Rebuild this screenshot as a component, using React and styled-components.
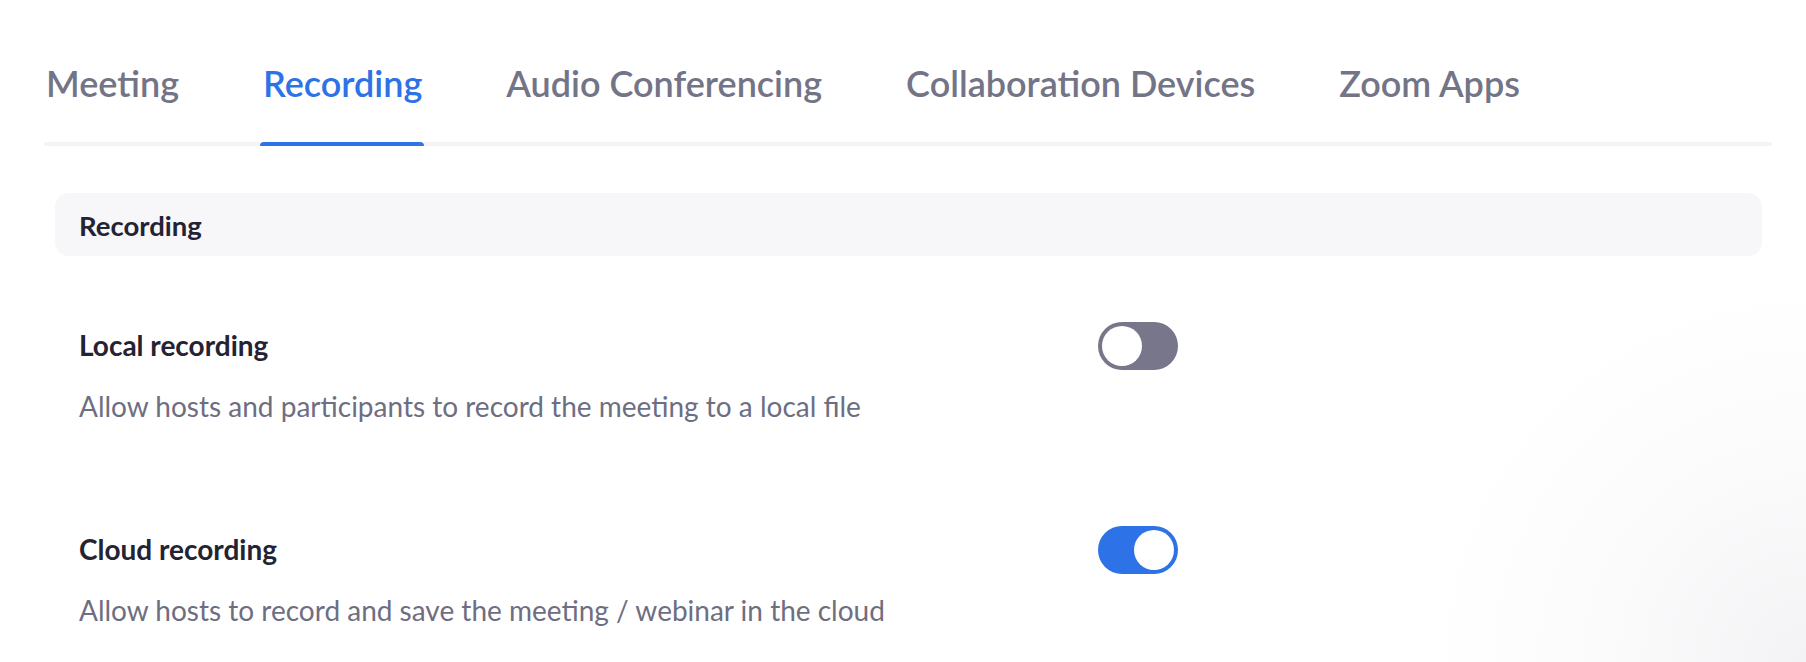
import React from 'react';
import styled, { createGlobalStyle } from 'styled-components';

const GlobalStyle = createGlobalStyle`
  html, body {
    margin: 0;
    padding: 0;
  }
  body {
    width: 1806px;
    height: 662px;
    overflow: hidden;
    font-family: Lato, "Open Sans", sans-serif;
    background: radial-gradient(circle at 100% 100%, #f3f3f5 0, #fbfbfc 200px, #ffffff 380px);
  }
`;

const Page = styled.div`
  padding: 0 34px 0 44px;
`;

const TabBar = styled.div`
  display: flex;
  gap: 84px;
  padding-left: 2px;
  border-bottom: 4px solid #f4f4f6;
`;

const Tab = styled.div`
  position: relative;
  padding: 62px 0 37px;
  font-size: 36px;
  line-height: 1.2;
  font-weight: 600;
  color: ${(p) => (p.active ? '#2d72e6' : '#747487')};
  white-space: nowrap;

  &::after {
    content: '';
    display: ${(p) => (p.active ? 'block' : 'none')};
    position: absolute;
    left: -3px;
    right: -2px;
    bottom: -4px;
    height: 4px;
    border-radius: 4px 4px 0 0;
    background: #2d72e6;
  }
`;

const SectionHeader = styled.div`
  margin: 47px 10px 0 11px;
  height: 63px;
  padding: 2px 24px 0;
  box-sizing: border-box;
  display: flex;
  align-items: center;
  background: #f7f7f9;
  border-radius: 14px;
  font-size: 27.5px;
  font-weight: 700;
  color: #232333;
`;

const SettingList = styled.div`
  display: flex;
  flex-direction: column;
  gap: 102px;
  padding: 66px 0 0 35px;
`;

const Setting = styled.div`
  display: grid;
  grid-template-columns: 1019px auto;
  row-gap: 20px;
`;

const Title = styled.div`
  align-self: center;
  font-size: 28px;
  font-weight: 700;
  line-height: 1.2;
  color: #232333;
`;

const Description = styled.div`
  grid-column: 1 / span 2;
  font-size: 28px;
  line-height: 1.2;
  font-weight: 400;
  color: #6e6e82;
`;

const Track = styled.div`
  width: 80px;
  height: 48px;
  border-radius: 24px;
  padding: 4px;
  box-sizing: border-box;
  display: flex;
  justify-content: ${(p) => (p.on ? 'flex-end' : 'flex-start')};
  background: ${(p) => (p.on ? '#2d72e6' : '#77768a')};
`;

const Knob = styled.div`
  width: 40px;
  height: 40px;
  border-radius: 50%;
  background: #ffffff;
`;

const Toggle = ({ on }) => (
  <Track on={on}>
    <Knob />
  </Track>
);

const tabs = ['Meeting', 'Recording', 'Audio Conferencing', 'Collaboration Devices', 'Zoom Apps'];

const settings = [
  {
    title: 'Local recording',
    desc: 'Allow hosts and participants to record the meeting to a local file',
    on: false,
  },
  {
    title: 'Cloud recording',
    desc: 'Allow hosts to record and save the meeting / webinar in the cloud',
    on: true,
  },
];

const App = () => (
  <>
    <GlobalStyle />
    <Page>
      <TabBar>
        {tabs.map((t) => (
          <Tab key={t} active={t === 'Recording'}>
            {t}
          </Tab>
        ))}
      </TabBar>
      <SectionHeader>Recording</SectionHeader>
      <SettingList>
        {settings.map((s) => (
          <Setting key={s.title}>
            <Title>{s.title}</Title>
            <Toggle on={s.on} />
            <Description>{s.desc}</Description>
          </Setting>
        ))}
      </SettingList>
    </Page>
  </>
);

export default App;
